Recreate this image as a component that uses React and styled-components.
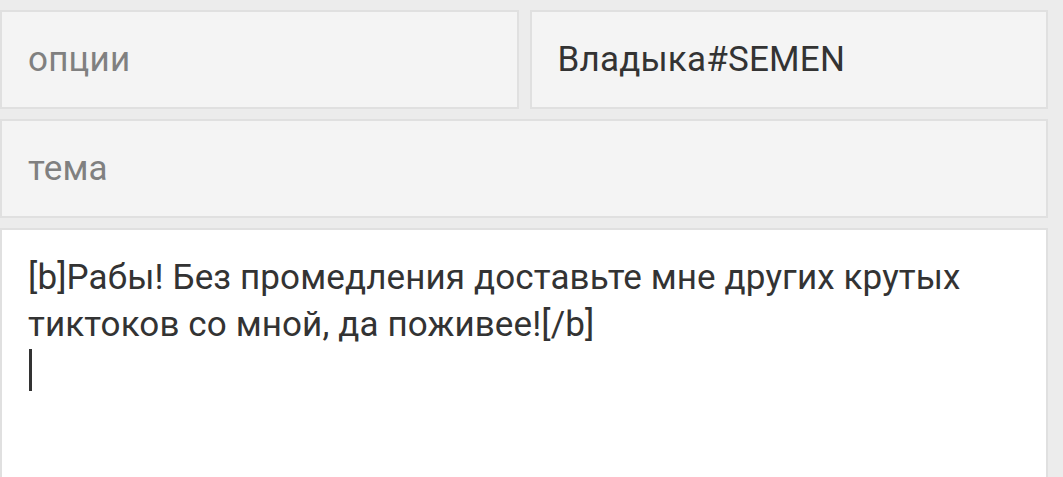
import styled, { createGlobalStyle } from "styled-components";

const GlobalStyle = createGlobalStyle`
  html, body {
    margin: 0;
    padding: 0;
    background: #ececec;
  }
  body {
    font-family: Roboto, "Noto Sans", sans-serif;
    overflow: hidden;
  }
`;

const Form = styled.div`
  display: grid;
  grid-template-columns: 1fr 1fr;
  grid-template-rows: 99px 99px 1fr;
  gap: 10px 11px;
  padding: 10px 15px 0 0;
  height: 477px;
  box-sizing: border-box;
`;

const Field = styled.input`
  grid-column: ${(p) => (p.$wide ? "1 / -1" : "auto")};
  box-sizing: border-box;
  width: 100%;
  height: 99px;
  margin: 0;
  padding: 0 26px;
  border: 2px solid #e0e0e0;
  background: #f4f4f4;
  font-family: Roboto, sans-serif;
  font-size: 35px;
  letter-spacing: 0.2px;
  color: #333;
  outline: none;

  &::placeholder {
    color: #808080;
    opacity: 1;
  }
`;

const Message = styled.div`
  grid-column: 1 / -1;
  box-sizing: border-box;
  padding: 24px 26px 0;
  border: 2px solid #e0e0e0;
  border-bottom: none;
  background: #fff;
  font-size: 35px;
  letter-spacing: 0.12px;
  line-height: 47px;
  color: #333;
  white-space: pre-wrap;
`;

const Caret = styled.span`
  display: inline-block;
  width: 3px;
  height: 42px;
  background: #333;
  vertical-align: -8px;
  margin-left: 1px;
`;

export default function App() {
  return (
    <>
      <GlobalStyle />
      <Form>
        <Field placeholder="опции" readOnly />
        <Field defaultValue="Владыка#SEMEN" readOnly />
        <Field $wide placeholder="тема" readOnly />
        <Message>
          {"[b]Рабы! Без промедления доставьте мне других крутых тиктоков со мной, да поживее![/b]\n"}
          <Caret />
        </Message>
      </Form>
    </>
  );
}
